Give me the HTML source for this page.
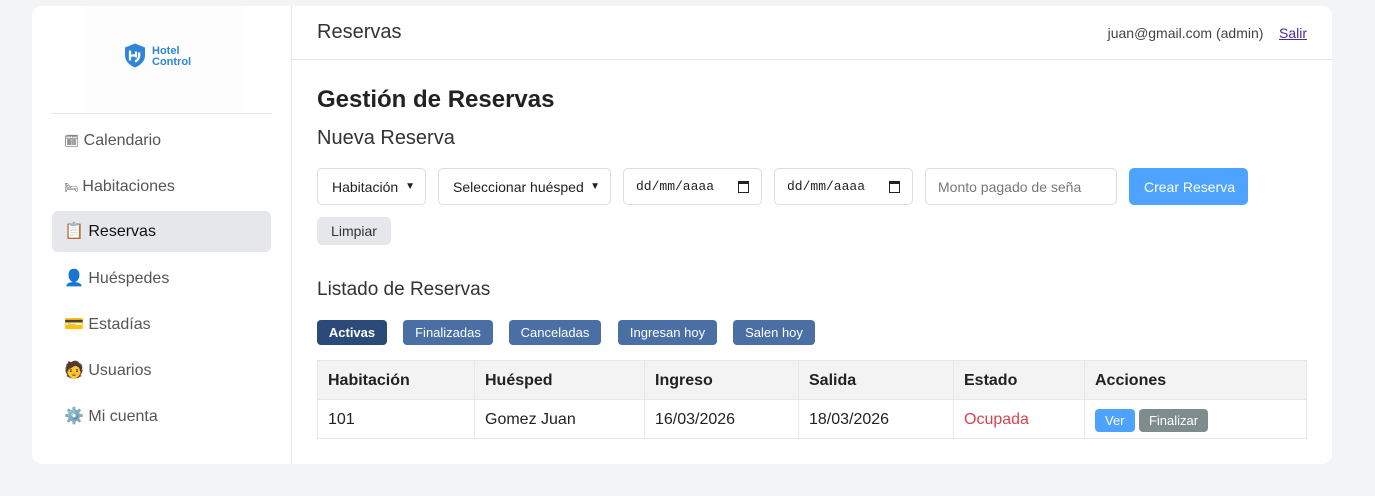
<!DOCTYPE html>
<html><head><meta charset="utf-8"><style>
*{box-sizing:border-box;margin:0;padding:0}
body{width:1375px;height:496px;background:#f3f4f6;font-family:"Liberation Sans",sans-serif;color:#222;position:relative;overflow:hidden}
.card{position:absolute;left:32px;top:6px;width:1300px;height:458px;background:#fff;border-radius:10px;overflow:hidden}
.side{position:absolute;left:0;top:0;width:260px;height:458px;border-right:1px solid #e5e7eb}
.logo{position:absolute;left:52px;top:0;width:158px;height:106px;background:#fdfdfd}
.sep{position:absolute;left:20px;top:107px;width:219px;border-top:1px solid #e5e7eb}
.nav{position:absolute;left:20px;width:219px;height:41px;font-size:16px;color:#555;padding-left:12px;line-height:42px;border-radius:6px}
.nav.act{background:#e5e7eb;color:#111}
.hdr{position:absolute;left:260px;top:0;right:0;height:54px;border-bottom:1px solid #e5e7eb}
.abs{position:absolute}
.inp{position:absolute;top:162px;height:37px;border:1px solid #ddd;border-radius:5px;font-size:14px;line-height:36px;padding-left:14px;color:#222}
.pill{position:absolute;top:314px;height:25px;line-height:25px;border-radius:4px;background:#4a6fa5;color:#fff;font-size:13px;text-align:center}
table{position:absolute;left:285px;top:354px;width:990px;border-collapse:collapse;font-size:16px}
td,th{border:1px solid #e5e7eb;padding:2px 10px 0;text-align:left;height:39px}
th{background:#f3f3f3;font-weight:bold}
</style></head><body>
<div class="card">
<div class="side">
<div class="logo">
<svg class="abs" style="left:39px;top:36px" width="24" height="27" viewBox="0 0 24 26"><path d="M12 1 L22 5 V13 C22 19 17 23 12 25 C7 23 2 19 2 13 V5 Z" fill="#2f86d9"/><path d="M7 8 V18 M7 13 H13 M13 9 V15 M16 10 C17 14 15 18 12 19" stroke="#fff" stroke-width="2.2" fill="none"/></svg>
<div class="abs" style="left:68px;top:40px;font-size:11px;font-weight:bold;color:#2f86d9;line-height:11px">Hotel<br>Control</div>
</div>
<div class="sep"></div>
<div class="nav" style="top:114px"><span style="font-size:12px">🗓</span> Calendario</div>
<div class="nav" style="top:160px"><span style="font-size:11px">🛏</span> Habitaciones</div>
<div class="nav act" style="top:205px">📋 Reservas</div>
<div class="nav" style="top:252px">👤 Huéspedes</div>
<div class="nav" style="top:298px">💳 Estadías</div>
<div class="nav" style="top:344px">🧑 Usuarios</div>
<div class="nav" style="top:390px">⚙️ Mi cuenta</div>
</div>
<div class="hdr">
<div class="abs" style="left:25px;top:15px;font-size:20px;color:#333">Reservas</div>
<div class="abs" style="right:25px;top:19px;font-size:14px;color:#444">juan@gmail.com (admin) &nbsp;&nbsp; <span style="color:#4b2a9a;text-decoration:underline">Salir</span></div>
</div>
<div class="abs" style="left:285px;top:80px;font-size:24px;font-weight:bold;color:#222">Gestión de Reservas</div>
<div class="abs" style="left:285px;top:121px;font-size:20px;color:#333">Nueva Reserva</div>
<div class="inp" style="left:285px;width:109px">Habitación <span style="position:absolute;right:10px;font-size:10px">▼</span></div>
<div class="inp" style="left:406px;width:173px">Seleccionar huésped <span style="position:absolute;right:10px;font-size:10px">▼</span></div>
<div class="inp" style="left:591px;width:139px;font-family:'Liberation Mono',monospace;font-size:13px;padding-left:12px">dd/mm/aaaa <span style="position:absolute;right:12px;top:12px;width:11px;height:12px;border:1.5px solid #222;border-top-width:3px"></span></div>
<div class="inp" style="left:742px;width:139px;font-family:'Liberation Mono',monospace;font-size:13px;padding-left:12px">dd/mm/aaaa <span style="position:absolute;right:12px;top:12px;width:11px;height:12px;border:1.5px solid #222;border-top-width:3px"></span></div>
<div class="inp" style="left:893px;width:192px;color:#777;padding-left:12px">Monto pagado de seña</div>
<div class="inp" style="left:1097px;width:119px;background:#4da3ff;border-color:#4da3ff;color:#fff">Crear Reserva</div>
<div class="abs" style="left:285px;top:211px;width:74px;height:28px;background:#e5e7eb;border-radius:5px;font-size:14px;line-height:29px;text-align:center;color:#333">Limpiar</div>
<div class="abs" style="left:285px;top:273px;font-size:19px;color:#333">Listado de Reservas</div>
<div class="pill" style="left:285px;width:70px;background:#2b4a7a;font-weight:bold">Activas</div>
<div class="pill" style="left:371px;width:90px">Finalizadas</div>
<div class="pill" style="left:477px;width:92px">Canceladas</div>
<div class="pill" style="left:586px;width:99px">Ingresan hoy</div>
<div class="pill" style="left:701px;width:82px">Salen hoy</div>
<table>
<tr><th style="width:157px">Habitación</th><th style="width:170px">Huésped</th><th style="width:154px">Ingreso</th><th style="width:155px">Salida</th><th style="width:131px">Estado</th><th>Acciones</th></tr>
<tr><td>101</td><td>Gomez Juan</td><td>16/03/2026</td><td>18/03/2026</td><td style="color:#d9434e">Ocupada</td><td><span style="display:inline-block;background:#4da3ff;color:#fff;font-size:13px;padding:4px 10px;border-radius:4px">Ver</span> <span style="display:inline-block;background:#7f8c8d;color:#fff;font-size:13px;padding:4px 10px;border-radius:4px">Finalizar</span></td></tr>
</table>
</div>
</body></html>
